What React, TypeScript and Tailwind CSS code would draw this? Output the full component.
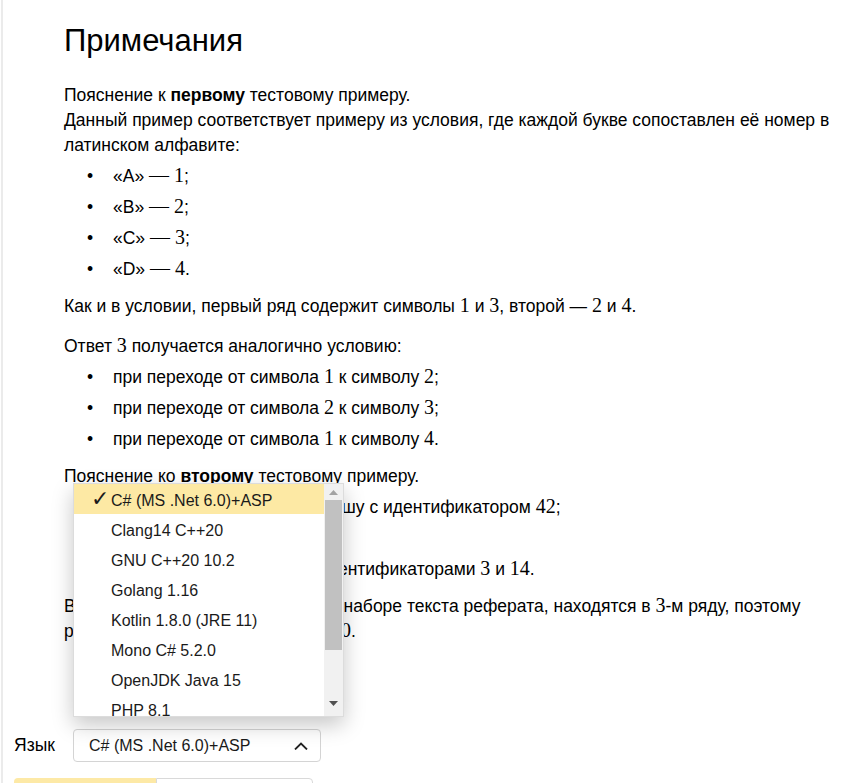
import React from 'react';

const num = "font-['Liberation_Serif','DejaVu_Serif',serif] text-[20px] leading-none";

const N = ({ children }: { children: React.ReactNode }) => (
    <span className={num}>{children}</span>
);

const Item = ({ children }: { children: React.ReactNode }) => (
    <li className="flex mt-[6px] leading-[25px]">
        <span className="w-[49px] shrink-0 pl-[23px]">•</span>
        <span>{children}</span>
    </li>
);

const languages = [
    'C# (MS .Net 6.0)+ASP',
    'Clang14 C++20',
    'GNU C++20 10.2',
    'Golang 1.16',
    'Kotlin 1.8.0 (JRE 11)',
    'Mono C# 5.2.0',
    'OpenJDK Java 15',
    'PHP 8.1',
];

const LanguageMenu = () => (
    <div className="absolute bottom-[45px] left-0 w-[271px] h-[234px] bg-white border border-[#dcdcdc] shadow-[0_8px_20px_rgba(0,0,0,0.22)] flex overflow-hidden">
        <ul className="w-[250px]">
            {languages.map((lang, i) => (
                <li
                    key={lang}
                    className={`relative h-[30px] pt-[2px] leading-[30px] pl-[37px] text-[16px] text-[#1a1a1a] ${i === 0 ? 'bg-[#fde9a4]' : ''}`}
                >
                    {i === 0 && (
                        <span className="absolute left-[17px] top-0 text-[22px] font-['DejaVu_Sans',sans-serif]">✓</span>
                    )}
                    {lang}
                </li>
            ))}
        </ul>
        <div className="w-[19px] bg-[#f1f1f1] flex flex-col items-center">
            <svg width="9" height="5" viewBox="0 0 9 5" className="mt-[6px]">
                <path d="M0 5 L4.5 0 L9 5 Z" fill="#a3a3a3" />
            </svg>
            <div className="w-[17px] h-[150px] bg-[#c1c1c1] mt-[5px]" />
            <div className="flex-1" />
            <svg width="9" height="5" viewBox="0 0 9 5" className="mb-[10px]">
                <path d="M0 0 L4.5 5 L9 0 Z" fill="#505050" />
            </svg>
        </div>
    </div>
);

export default function App() {
    return (
        <div className="h-[783px] overflow-hidden bg-white">
            <div className="ml-px h-full border-l-2 border-[#ebebeb] text-black text-[17.5px] font-['Liberation_Sans','Arial',sans-serif]">
                <section className="pl-[61px] pr-[14px]">
                    <h1 className="pt-[22px] text-[31px] leading-[37px] font-normal">Примечания</h1>

                    <p className="mt-[24px] leading-[25px]">
                        Пояснение к <b>первому</b> тестовому примеру.
                        <br />
                        Данный пример соответствует примеру из условия, где каждой букве сопоставлен её номер в латинском алфавите:
                    </p>
                    <ul className="mb-[12px]">
                        <Item>«A» <N>— 1</N>;</Item>
                        <Item>«B» <N>— 2</N>;</Item>
                        <Item>«C» <N>— 3</N>;</Item>
                        <Item>«D» <N>— 4</N>.</Item>
                    </ul>

                    <p className="mb-[15px] leading-[25px]">
                        Как и в условии, первый ряд содержит символы <N>1</N> и <N>3</N>, второй — <N>2</N> и <N>4</N>.
                    </p>
                    <p className="leading-[25px]">
                        Ответ <N>3</N> получается аналогично условию:
                    </p>
                    <ul className="mb-[12px]">
                        <Item>при переходе от символа <N>1</N> к символу <N>2</N>;</Item>
                        <Item>при переходе от символа <N>2</N> к символу <N>3</N>;</Item>
                        <Item>при переходе от символа <N>1</N> к символу <N>4</N>.</Item>
                    </ul>

                    <p className="leading-[25px]">
                        Пояснение ко <b>второму</b> тестовому примеру.
                    </p>
                    <ul className="mb-[12px]">
                        <Item>первый ряд содержит клавишу с идентификатором <N>42</N>;</Item>
                        <Item>второй ряд пуст;</Item>
                        <Item>третий ряд — клавиши с идентификаторами <N>3</N> и <N>14</N>.</Item>
                    </ul>
                    <p className="leading-[25px]">
                        Все символы, которые нужны при наборе текста реферата, находятся в <N>3</N>-м ряду, поэтому раскладку менять не придётся — <N>0</N>.
                    </p>
                </section>

                <section className="pl-[11px] mt-[85px]">
                    <div className="flex items-center">
                        <span className="w-[59px] leading-[33px]">Язык</span>
                        <div className="relative">
                            <LanguageMenu />
                            <button className="w-[248px] h-[33px] border border-[#d4d4d4] rounded-[4px] flex items-center justify-between pl-[15px] pr-[12px] text-[16px] text-[#1a1a1a] bg-white">
                                <span>C# (MS .Net 6.0)+ASP</span>
                                <svg width="14" height="8" viewBox="0 0 14 8">
                                    <polyline points="1,7.5 7,1.5 13,7.5" fill="none" stroke="#222" strokeWidth="1.8" />
                                </svg>
                            </button>
                        </div>
                    </div>
                    <div className="flex mt-[16px]">
                        <button className="w-[142px] h-[40px] bg-[#fde9a6] rounded-l-[4px]" />
                        <button className="w-[157px] h-[40px] bg-white border border-[#d9d9d9] rounded-r-[4px]" />
                    </div>
                </section>
            </div>
        </div>
    );
}
